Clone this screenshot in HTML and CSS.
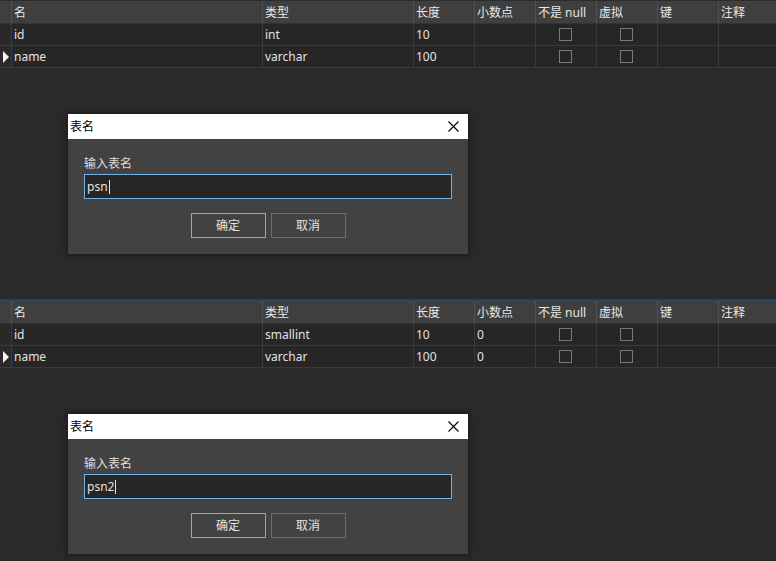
FILE: index.html
```html
<!DOCTYPE html>
<html lang="zh">
<head>
<meta charset="utf-8">
<title>表名</title>
<link rel="stylesheet" href="styles.css">
</head>
<body>
<section class="pane">
  <div class="grid">
    <div class="hc"></div><div class="hc">名</div><div class="hc">类型</div><div class="hc">长度</div><div class="hc">小数点</div><div class="hc">不是 null</div><div class="hc">虚拟</div><div class="hc">键</div><div class="hc last">注释</div>
    <div class="rh"></div><div class="c">id</div><div class="c">int</div><div class="c">10</div><div class="c"></div><div class="c cb"><span class="box"></span></div><div class="c cb"><span class="box"></span></div><div class="c"></div><div class="c last"></div>
    <div class="rh"><span class="tri"></span></div><div class="c">name</div><div class="c">varchar</div><div class="c">100</div><div class="c"></div><div class="c cb"><span class="box"></span></div><div class="c cb"><span class="box"></span></div><div class="c"></div><div class="c last"></div>
  </div>
  <div class="dialog">
    <div class="titlebar">
      <span class="title">表名</span>
      <svg class="close" width="11" height="11" viewBox="0 0 11 11"><path d="M0.5 0.5 L10.5 10.5 M10.5 0.5 L0.5 10.5" stroke="#000" stroke-width="1.1" fill="none"/></svg>
    </div>
    <div class="body">
      <div class="label">输入表名</div>
      <div class="input">psn<span class="caret"></span></div>
      <div class="buttons">
        <div class="btn primary">确定</div>
        <div class="btn">取消</div>
      </div>
    </div>
  </div>
</section>
<section class="pane second">
  <div class="grid">
    <div class="hc"></div><div class="hc">名</div><div class="hc">类型</div><div class="hc">长度</div><div class="hc">小数点</div><div class="hc">不是 null</div><div class="hc">虚拟</div><div class="hc">键</div><div class="hc last">注释</div>
    <div class="rh"></div><div class="c">id</div><div class="c">smallint</div><div class="c">10</div><div class="c">0</div><div class="c cb"><span class="box"></span></div><div class="c cb"><span class="box"></span></div><div class="c"></div><div class="c last"></div>
    <div class="rh"><span class="tri"></span></div><div class="c">name</div><div class="c">varchar</div><div class="c">100</div><div class="c">0</div><div class="c cb"><span class="box"></span></div><div class="c cb"><span class="box"></span></div><div class="c"></div><div class="c last"></div>
  </div>
  <div class="dialog">
    <div class="titlebar">
      <span class="title">表名</span>
      <svg class="close" width="11" height="11" viewBox="0 0 11 11"><path d="M0.5 0.5 L10.5 10.5 M10.5 0.5 L0.5 10.5" stroke="#000" stroke-width="1.1" fill="none"/></svg>
    </div>
    <div class="body">
      <div class="label">输入表名</div>
      <div class="input">psn2<span class="caret"></span></div>
      <div class="buttons">
        <div class="btn primary">确定</div>
        <div class="btn">取消</div>
      </div>
    </div>
  </div>
</section>
</body>
</html>
```

FILE: styles.css
```css
* { box-sizing: border-box; }
html, body {
  margin: 0;
  padding: 0;
  background: #2a2a2a;
  width: 776px;
  height: 561px;
  overflow: hidden;
  font-family: "Noto Sans", "Noto Sans CJK SC", sans-serif;
  font-size: 12px;
  color: #e2e2e2;
}
.pane {
  height: 300px;
  display: flex;
  flex-direction: column;
}
.pane.second { height: 261px; }

.grid {
  display: grid;
  grid-template-columns: 12px 251px 151px 61px 61px 61px 61px 61px 1fr;
  grid-template-rows: 23px 22px 22px;
  border-top: 1px solid #2c2c2c;
}
.second .grid {
  border-top-color: #284b6e;
  box-shadow: 0 -1px 2px rgba(40, 75, 110, 0.7);
}
.hc {
  background: #3f3f3f;
  border-right: 1px solid #505050;
  border-bottom: 1px solid #333333;
  padding-left: 2px;
  line-height: 24px;
  color: #e8e8e8;
  white-space: nowrap;
  overflow: hidden;
}
.rh {
  background: #292929;
  border-right: 1px solid #3c3c3c;
  border-bottom: 1px solid #3c3c3c;
  display: flex;
  align-items: center;
  padding-left: 3px;
}
.c {
  background: #262626;
  border-right: 1px solid #3a3a3a;
  border-bottom: 1px solid #3a3a3a;
  padding-left: 2px;
  line-height: 21px;
  white-space: nowrap;
}
.last { border-right: none; }
.cb {
  display: flex;
  align-items: center;
  justify-content: center;
  padding-left: 0;
  padding-right: 1px;
}
.box {
  width: 13px;
  height: 13px;
  border: 1px solid #7a7a7a;
  margin-top: -1px;
}
.tri {
  width: 0;
  height: 0;
  border-top: 6px solid transparent;
  border-bottom: 6px solid transparent;
  border-left: 6px solid #f2f2f2;
}

.dialog {
  width: 400px;
  margin: 46px 0 0 68px;
  box-shadow: 0 0 5px 2px rgba(0, 0, 0, 0.3);
}
.titlebar {
  height: 25px;
  background: #ffffff;
  display: flex;
  align-items: center;
  justify-content: space-between;
  padding: 0 9px 0 2px;
}
.title {
  color: #000;
  font-size: 12px;
  line-height: 25px;
}
.close { display: block; }
.body {
  background: #424242;
  height: 115px;
  padding: 16px 16px 0 16px;
}
.label {
  line-height: 17px;
  color: #dedede;
}
.input {
  margin-top: 2px;
  height: 25px;
  border: 1px solid #74b3e6;
  background: #262626;
  padding-left: 2px;
  line-height: 23px;
  color: #e2e2e2;
  display: flex;
  align-items: center;
}
.caret {
  display: inline-block;
  width: 1px;
  height: 14px;
  background: #e2e2e2;
  margin-left: 1px;
}
.buttons {
  margin-top: 14px;
  display: flex;
  justify-content: center;
  gap: 5px;
}
.btn {
  width: 75px;
  height: 25px;
  border: 1px solid #6e6e6e;
  background: #424242;
  color: #e2e2e2;
  text-align: center;
  line-height: 23px;
}
.btn.primary { border-color: #74b3e6; }
```
